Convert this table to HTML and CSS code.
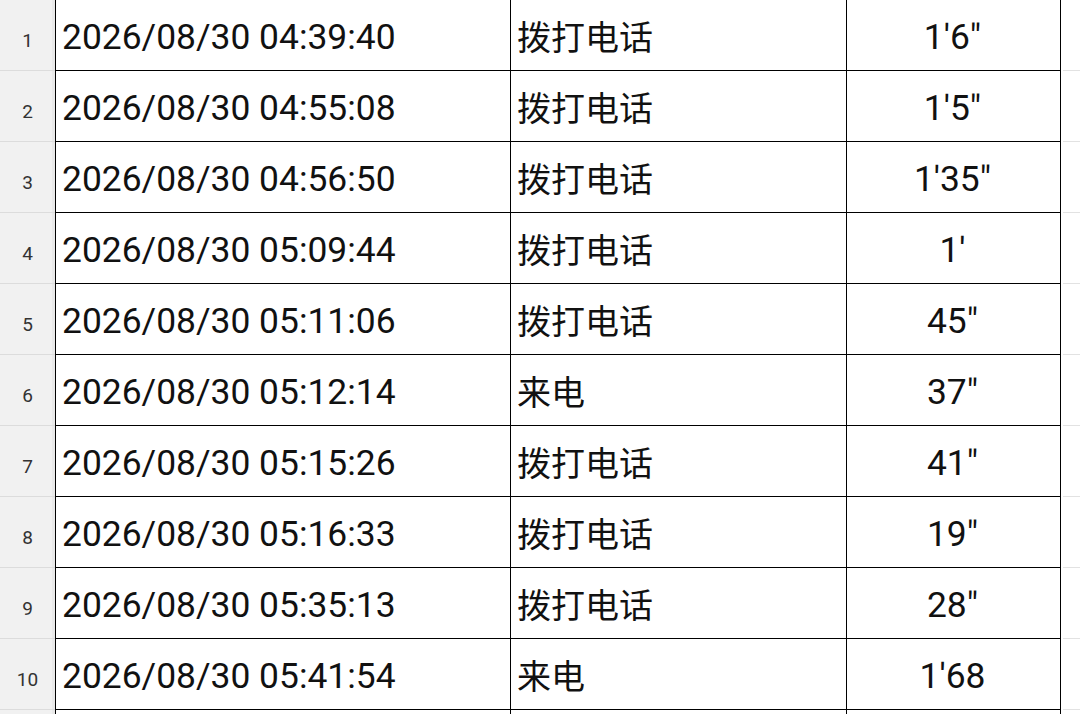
FILE: index.html
```html
<!DOCTYPE html>
<html lang="zh-CN">
<head>
<meta charset="utf-8">
<title>通话记录</title>
<link rel="stylesheet" href="styles.css">
</head>
<body>
<div class="sheet">
  <div class="row"><div class="hdr">1</div><div class="cell a">2026/08/30 04:39:40</div><div class="cell b">拨打电话</div><div class="cell c">1'6"</div><div class="rest"></div></div>
  <div class="row"><div class="hdr">2</div><div class="cell a">2026/08/30 04:55:08</div><div class="cell b">拨打电话</div><div class="cell c">1'5"</div><div class="rest"></div></div>
  <div class="row"><div class="hdr">3</div><div class="cell a">2026/08/30 04:56:50</div><div class="cell b">拨打电话</div><div class="cell c">1'35"</div><div class="rest"></div></div>
  <div class="row"><div class="hdr">4</div><div class="cell a">2026/08/30 05:09:44</div><div class="cell b">拨打电话</div><div class="cell c">1'</div><div class="rest"></div></div>
  <div class="row"><div class="hdr">5</div><div class="cell a">2026/08/30 05:11:06</div><div class="cell b">拨打电话</div><div class="cell c">45"</div><div class="rest"></div></div>
  <div class="row"><div class="hdr">6</div><div class="cell a">2026/08/30 05:12:14</div><div class="cell b">来电</div><div class="cell c">37"</div><div class="rest"></div></div>
  <div class="row"><div class="hdr">7</div><div class="cell a">2026/08/30 05:15:26</div><div class="cell b">拨打电话</div><div class="cell c">41"</div><div class="rest"></div></div>
  <div class="row"><div class="hdr">8</div><div class="cell a">2026/08/30 05:16:33</div><div class="cell b">拨打电话</div><div class="cell c">19"</div><div class="rest"></div></div>
  <div class="row"><div class="hdr">9</div><div class="cell a">2026/08/30 05:35:13</div><div class="cell b">拨打电话</div><div class="cell c">28"</div><div class="rest"></div></div>
  <div class="row"><div class="hdr">10</div><div class="cell a">2026/08/30 05:41:54</div><div class="cell b">来电</div><div class="cell c">1'68</div><div class="rest"></div></div>
  <div class="row short"><div class="hdr"></div><div class="cell a"></div><div class="cell b"></div><div class="cell c"></div><div class="rest"></div></div>
</div>
</body>
</html>
```
FILE: styles.css
```css
html, body {
  margin: 0;
  padding: 0;
  background: #ffffff;
  overflow: hidden;
}

.sheet {
  display: flex;
  flex-direction: column;
  width: 1080px;
  height: 714px;
  overflow: hidden;
}

.row {
  display: grid;
  grid-template-columns: 55px 455px 336px 215px 1fr;
  height: 71px;
  flex: none;
}

.row.short {
  height: 4px;
}

.hdr {
  background: #f1f1f1;
  border-bottom: 1px solid #dcdcdc;
  box-shadow: inset -3px 0 0 #e9e9e9;
  display: flex;
  align-items: center;
  justify-content: center;
  padding-top: 10px;
  box-sizing: border-box;
  font-family: Roboto, "Noto Sans", sans-serif;
  font-size: 19px;
  color: #333333;
}

.cell {
  box-sizing: border-box;
  border-left: 1px solid #000000;
  border-bottom: 1px solid #000000;
  display: flex;
  align-items: center;
  padding-top: 3px;
  font-family: Roboto, "Noto Sans CJK SC", sans-serif;
  font-size: 35.4px;
  color: #111111;
  white-space: nowrap;
}

.a {
  padding-left: 6px;
}

.b {
  padding-left: 6px;
  font-family: "Noto Sans CJK SC", sans-serif;
  font-size: 34px;
  padding-top: 1px;
}

.c {
  justify-content: center;
  border-right: 1px solid #000000;
  padding-right: 2px;
}

.short .cell,
.short .hdr {
  border-bottom: none;
}

.rest {
  border-bottom: 1px solid #e2e2e2;
  margin-left: 2px;
  background: #ffffff;
}
```
